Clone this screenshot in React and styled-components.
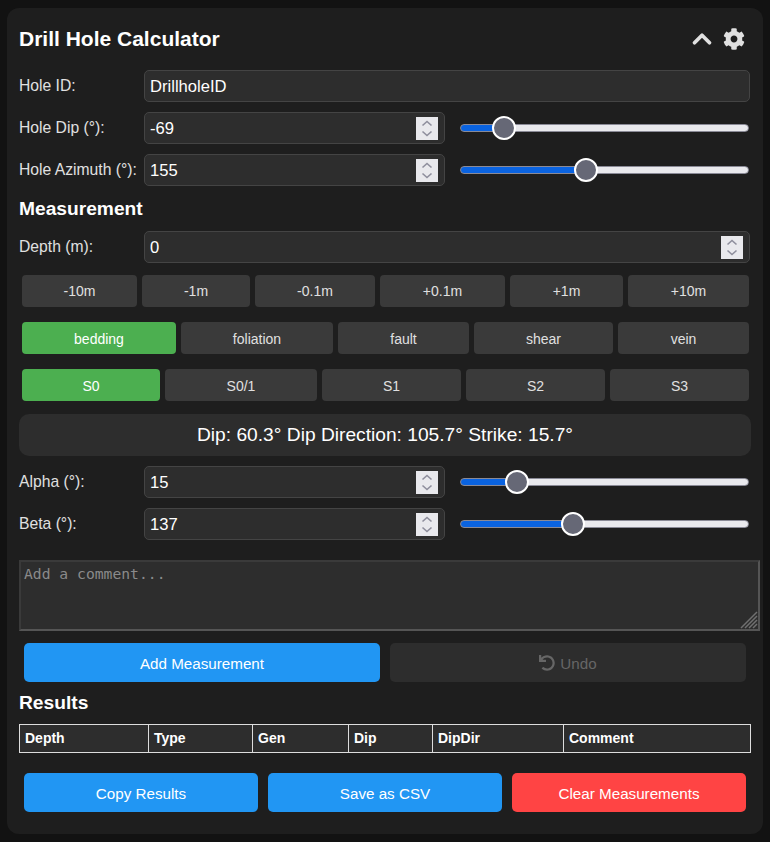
import React from 'react';
import styled, { createGlobalStyle } from 'styled-components';
import { FaCog, FaUndo } from 'react-icons/fa';
import { ChevronUp } from 'lucide-react';

const spinIcon = "url(\"data:image/svg+xml,%3Csvg xmlns='http://www.w3.org/2000/svg' width='22' height='23'%3E%3Cpath d='M6.5 8.5 11 4.5l4.5 4M6.5 14.5l4.5 4 4.5-4' fill='none' stroke='%238f8f9d' stroke-width='1.6'/%3E%3C/svg%3E\")"

const GlobalStyle = createGlobalStyle`
  html, body {
    margin: 0;
    background: #121212;
  }
  * {
    box-sizing: border-box;
  }
`

const Page = styled.div`
  padding: 8px 7px;
  font-family: "Liberation Sans", Arial, sans-serif;
  color: #e0e0e0;
`

const Card = styled.div`
  width: 756px;
  height: 826px;
  background: #1e1e1e;
  border-radius: 12px;
  padding: 12px 12px 0;
`

const TitleBar = styled.div`
  display: flex;
  justify-content: space-between;
  align-items: center;
  height: 38px;
  margin-bottom: 12px;
`

const Title = styled.h2`
  margin: 0;
  font-size: 21px;
  font-weight: bold;
  color: #fff;
`

const TitleIcons = styled.div`
  display: flex;
  align-items: center;
  gap: 6px;
  padding-right: 6px;
  color: #e0e0e0;
`

const Row = styled.div`
  display: flex;
  align-items: center;
  height: 32px;
  margin-bottom: ${props => props.$gap ?? 10}px;
  width: 731px;
`

const Label = styled.label`
  flex: 0 0 125px;
  font-size: 15.7px;
  white-space: nowrap;
`

const Field = styled.input`
  height: 32px;
  flex: ${props => props.$narrow ? '0 0 301px' : '1'};
  min-width: 0;
  background: #2d2d2d;
  border: 1px solid #444;
  border-radius: 5px;
  color: #fff;
  font-family: inherit;
  font-size: 16.6px;
  padding: 3px 6px 1px 5px;
  outline: none;
  &::-webkit-inner-spin-button {
    -webkit-appearance: none;
    opacity: 1;
    width: 22px;
    height: 23px;
    margin-top: -1px;
    background: #e9e9ed ${spinIcon} center no-repeat;
  }
`

const Slider = styled.input`
  -webkit-appearance: none;
  appearance: none;
  width: 289px;
  height: 24px;
  margin: 0 0 0 15px;
  background: transparent;
  &::-webkit-slider-runnable-track {
    height: 8px;
    border-radius: 4px;
    border: 1px solid #8a8a96;
    background: linear-gradient(to right, #0a63e0 ${props => props.$pct}%, #e9e9ed ${props => props.$pct}%);
  }
  &::-webkit-slider-thumb {
    -webkit-appearance: none;
    width: 24px;
    height: 24px;
    margin-top: -9px;
    border-radius: 50%;
    border: 2px solid #fff;
    background: #666876;
  }
`

const SectionTitle = styled.h3`
  margin: 0;
  font-size: 19.2px;
  font-weight: bold;
  color: #fff;
  line-height: 21px;
`

const MeasurementTitle = styled(SectionTitle)`
  margin: 12px 0 12px;
`

const ButtonRow = styled.div`
  display: grid;
  grid-template-columns: ${props => props.$cols};
  gap: 5px;
  padding-left: 3px;
  margin-bottom: 15px;
`

const ChipButton = styled.button`
  height: 32px;
  padding: ${props => props.$low ? '2px 0 0' : '0'};
  border: none;
  border-radius: 4px;
  background: ${props => props.$active ? '#4caf50' : '#3a3a3a'};
  color: ${props => props.$active ? '#fff' : '#e0e0e0'};
  font-family: inherit;
  font-size: 14px;
`

const ResultBox = styled.div`
  width: 732px;
  height: 42px;
  margin: -2px 0 10px;
  background: #2d2d2d;
  border-radius: 10px;
  display: flex;
  align-items: center;
  justify-content: center;
  font-size: 19.2px;
  color: #fff;
`

const CommentWrap = styled.div`
  position: relative;
  width: 741px;
  margin: 20px 0 12px;
`

const Comment = styled.textarea`
  display: block;
  width: 100%;
  height: 71px;
  padding: 3px;
  background: #2d2d2d;
  border-style: solid;
  border-width: 2px;
  border-color: #3a3a3a #555 #555 #3a3a3a;
  color: #fff;
  font-family: "DejaVu Sans Mono", monospace;
  font-size: 14.7px;
  outline: none;
  resize: none;
  &::placeholder {
    color: #8a8a8a;
  }
`

const Grip = styled.svg`
  position: absolute;
  right: 2px;
  bottom: 2px;
  pointer-events: none;
`

const ActionRow = styled.div`
  display: flex;
  gap: 10px;
  width: 732px;
  padding: 0 5px;
  margin-bottom: ${props => props.$gap}px;
`

const ActionButton = styled.button`
  flex: 1 1 0;
  height: 39px;
  border: none;
  border-radius: 5px;
  padding: 1px 0 0;
  background: ${props => props.$bg};
  color: ${props => props.$fg || '#fff'};
  font-family: inherit;
  font-size: 15.2px;
  display: flex;
  align-items: center;
  justify-content: center;
  gap: 5px;
`

const ResultsTitle = styled(SectionTitle)`
  margin: -1px 0 11px;
`

const Table = styled.table`
  width: 731px;
  table-layout: fixed;
  border-collapse: collapse;
  margin-bottom: 20px;
  th {
    height: 28px;
    padding: 0 5px 2px;
    border: 1px solid #ddd;
    background: #2d2d2d;
    color: #fff;
    font-size: 14px;
    font-weight: bold;
    text-align: left;
  }
`

const columns = [
  ['Depth', 129], ['Type', 104], ['Gen', 96], ['Dip', 84], ['DipDir', 131], ['Comment', 187]
]

const NumberRow = ({ label, value, min, max, gap }) => (
  <Row $gap={gap}>
    <Label>{label}</Label>
    <Field $narrow type="number" defaultValue={value} min={min} max={max} />
    <Slider type="range" min={min} max={max} defaultValue={value} $pct={(value - min) / (max - min) * 100} />
  </Row>
)

const App = () => {
  return (
    <Page>
      <GlobalStyle />
      <Card>
        <TitleBar>
          <Title>Drill Hole Calculator</Title>
          <TitleIcons>
            <ChevronUp size={30} strokeWidth={3} />
            <FaCog size={22} />
          </TitleIcons>
        </TitleBar>

        <Row>
          <Label>Hole ID:</Label>
          <Field type="text" defaultValue="DrillholeID" />
        </Row>
        <NumberRow label="Hole Dip (°):" value={-69} min={-90} max={90} />
        <NumberRow label="Hole Azimuth (°):" value={155} min={0} max={360} gap={0} />

        <MeasurementTitle>Measurement</MeasurementTitle>
        <Row $gap={12}>
          <Label>Depth (m):</Label>
          <Field type="number" defaultValue={0} />
        </Row>

        <ButtonRow $cols="115px 108px 120px 125px 113px 121px">
          {['-10m', '-1m', '-0.1m', '+0.1m', '+1m', '+10m'].map(t => <ChipButton key={t}>{t}</ChipButton>)}
        </ButtonRow>
        <ButtonRow $cols="154px 152px 131px 139px 131px">
          {['bedding', 'foliation', 'fault', 'shear', 'vein'].map((t, i) => <ChipButton key={t} $low $active={i === 0}>{t}</ChipButton>)}
        </ButtonRow>
        <ButtonRow $cols="138px 152px 139px 139px 139px">
          {['S0', 'S0/1', 'S1', 'S2', 'S3'].map((t, i) => <ChipButton key={t} $low $active={i === 0}>{t}</ChipButton>)}
        </ButtonRow>

        <ResultBox>Dip: 60.3° Dip Direction: 105.7° Strike: 15.7°</ResultBox>

        <NumberRow label="Alpha (°):" value={15} min={0} max={90} />
        <NumberRow label="Beta (°):" value={137} min={0} max={360} gap={0} />

        <CommentWrap>
          <Comment placeholder="Add a comment..." />
          <Grip width="18" height="18" viewBox="0 0 18 18" stroke="#707070" strokeWidth="1.5" fill="none">
            <path d="M1 17 17 1M5 17 17 5M9 17l8-8M13 17l4-4" />
          </Grip>
        </CommentWrap>

        <ActionRow $gap={11}>
          <ActionButton $bg="#2196f3">Add Measurement</ActionButton>
          <ActionButton $bg="#2d2d2d" $fg="#666">
            <FaUndo size={16} />
            Undo
          </ActionButton>
        </ActionRow>

        <ResultsTitle>Results</ResultsTitle>
        <Table>
          <colgroup>
            {columns.map(([name, width]) => <col key={name} width={width} />)}
          </colgroup>
          <thead>
            <tr>
              {columns.map(([name]) => <th key={name}>{name}</th>)}
            </tr>
          </thead>
        </Table>

        <ActionRow $gap={0}>
          <ActionButton $bg="#2196f3">Copy Results</ActionButton>
          <ActionButton $bg="#2196f3">Save as CSV</ActionButton>
          <ActionButton $bg="#f44">Clear Measurements</ActionButton>
        </ActionRow>
      </Card>
    </Page>
  );
};

export default App;
